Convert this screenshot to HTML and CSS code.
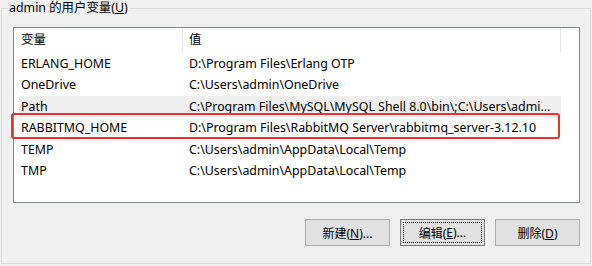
FILE: index.html
```html
<!DOCTYPE html>
<html lang="zh-CN">
<head>
    <meta charset="UTF-8">
    <title>用户变量</title>
    <link rel="stylesheet" href="styles.css">
</head>
<body>
    <fieldset class="group">
        <legend>admin 的用户变量(<u>U</u>)</legend>
        <div class="list">
            <div class="list-header">
                <div class="col-head name">变量</div>
                <div class="col-head value">值</div>
            </div>
            <div class="row">
                <span class="cell name">ERLANG_HOME</span>
                <span class="cell value">D:\Program Files\Erlang OTP</span>
            </div>
            <div class="row">
                <span class="cell name">OneDrive</span>
                <span class="cell value">C:\Users\admin\OneDrive</span>
            </div>
            <div class="row hover">
                <span class="cell name">Path</span>
                <span class="cell value">C:\Program Files\MySQL\MySQL Shell 8.0\bin\;C:\Users\admi...</span>
            </div>
            <div class="row marked">
                <span class="cell name">RABBITMQ_HOME</span>
                <span class="cell value">D:\Program Files\RabbitMQ Server\rabbitmq_server-3.12.10</span>
            </div>
            <div class="row">
                <span class="cell name">TEMP</span>
                <span class="cell value">C:\Users\admin\AppData\Local\Temp</span>
            </div>
            <div class="row">
                <span class="cell name">TMP</span>
                <span class="cell value">C:\Users\admin\AppData\Local\Temp</span>
            </div>
        </div>
        <div class="buttons">
            <button class="btn">新建(<u>N</u>)...</button>
            <button class="btn focused"><span class="focus-ring">编辑(<u>E</u>)...</span></button>
            <button class="btn">删除(<u>D</u>)</button>
        </div>
    </fieldset>
</body>
</html>
```

FILE: styles.css
```css
*,
*::before,
*::after {
    box-sizing: border-box;
}

body {
    margin: 0;
    width: 592px;
    height: 266px;
    background: #f0f0f0;
    font-family: "Noto Sans", "Noto Sans CJK SC", sans-serif;
    font-size: 12.4px;
    color: #000;
    overflow: hidden;
}

.group {
    margin: 0 1px 2px 1px;
    padding: 0 0 0 11px;
    height: 264px;
    border: 1px solid #dcdcdc;
}

.group legend {
    margin-left: -5px;
    padding: 0 2px 0 1px;
    height: 16px;
    line-height: 16px;
}

.list {
    margin-top: 11px;
    width: 567px;
    height: 176px;
    background: #fff;
    border: 1px solid #828790;
}

.list-header {
    display: flex;
    height: 25px;
}

.col-head {
    padding-left: 6px;
    line-height: 24px;
    border-right: 1px solid #e5e5e5;
    height: 24px;
}

.col-head.name {
    width: 169px;
    padding-left: 7px;
}

.col-head.value {
    width: 378px;
}

.row {
    position: relative;
    display: flex;
    margin-left: 5px;
    width: 542px;
    height: 21.4px;
    line-height: 21.4px;
    white-space: nowrap;
}

.row.hover {
    background: #efefef;
}

.row.marked::after {
    content: "";
    position: absolute;
    left: -8px;
    top: -4px;
    width: 549px;
    height: 26px;
    border: 2px solid #e8352c;
    border-radius: 3px;
}

.cell {
    padding-left: 2px;
}

.cell.name {
    width: 168px;
}

.buttons {
    display: flex;
    justify-content: flex-end;
    gap: 10px;
    margin-top: 16px;
    width: 567px;
}

.btn {
    width: 85px;
    height: 27px;
    padding: 0;
    background: #e1e1e1;
    border: 1px solid #adadad;
    font-family: inherit;
    font-size: 12px;
    color: #000;
}

.btn.focused {
    border-color: #7a7a7a;
    padding: 2px;
}

.focus-ring {
    display: flex;
    align-items: center;
    justify-content: center;
    height: 100%;
    border: 1px dotted #000;
}
```
